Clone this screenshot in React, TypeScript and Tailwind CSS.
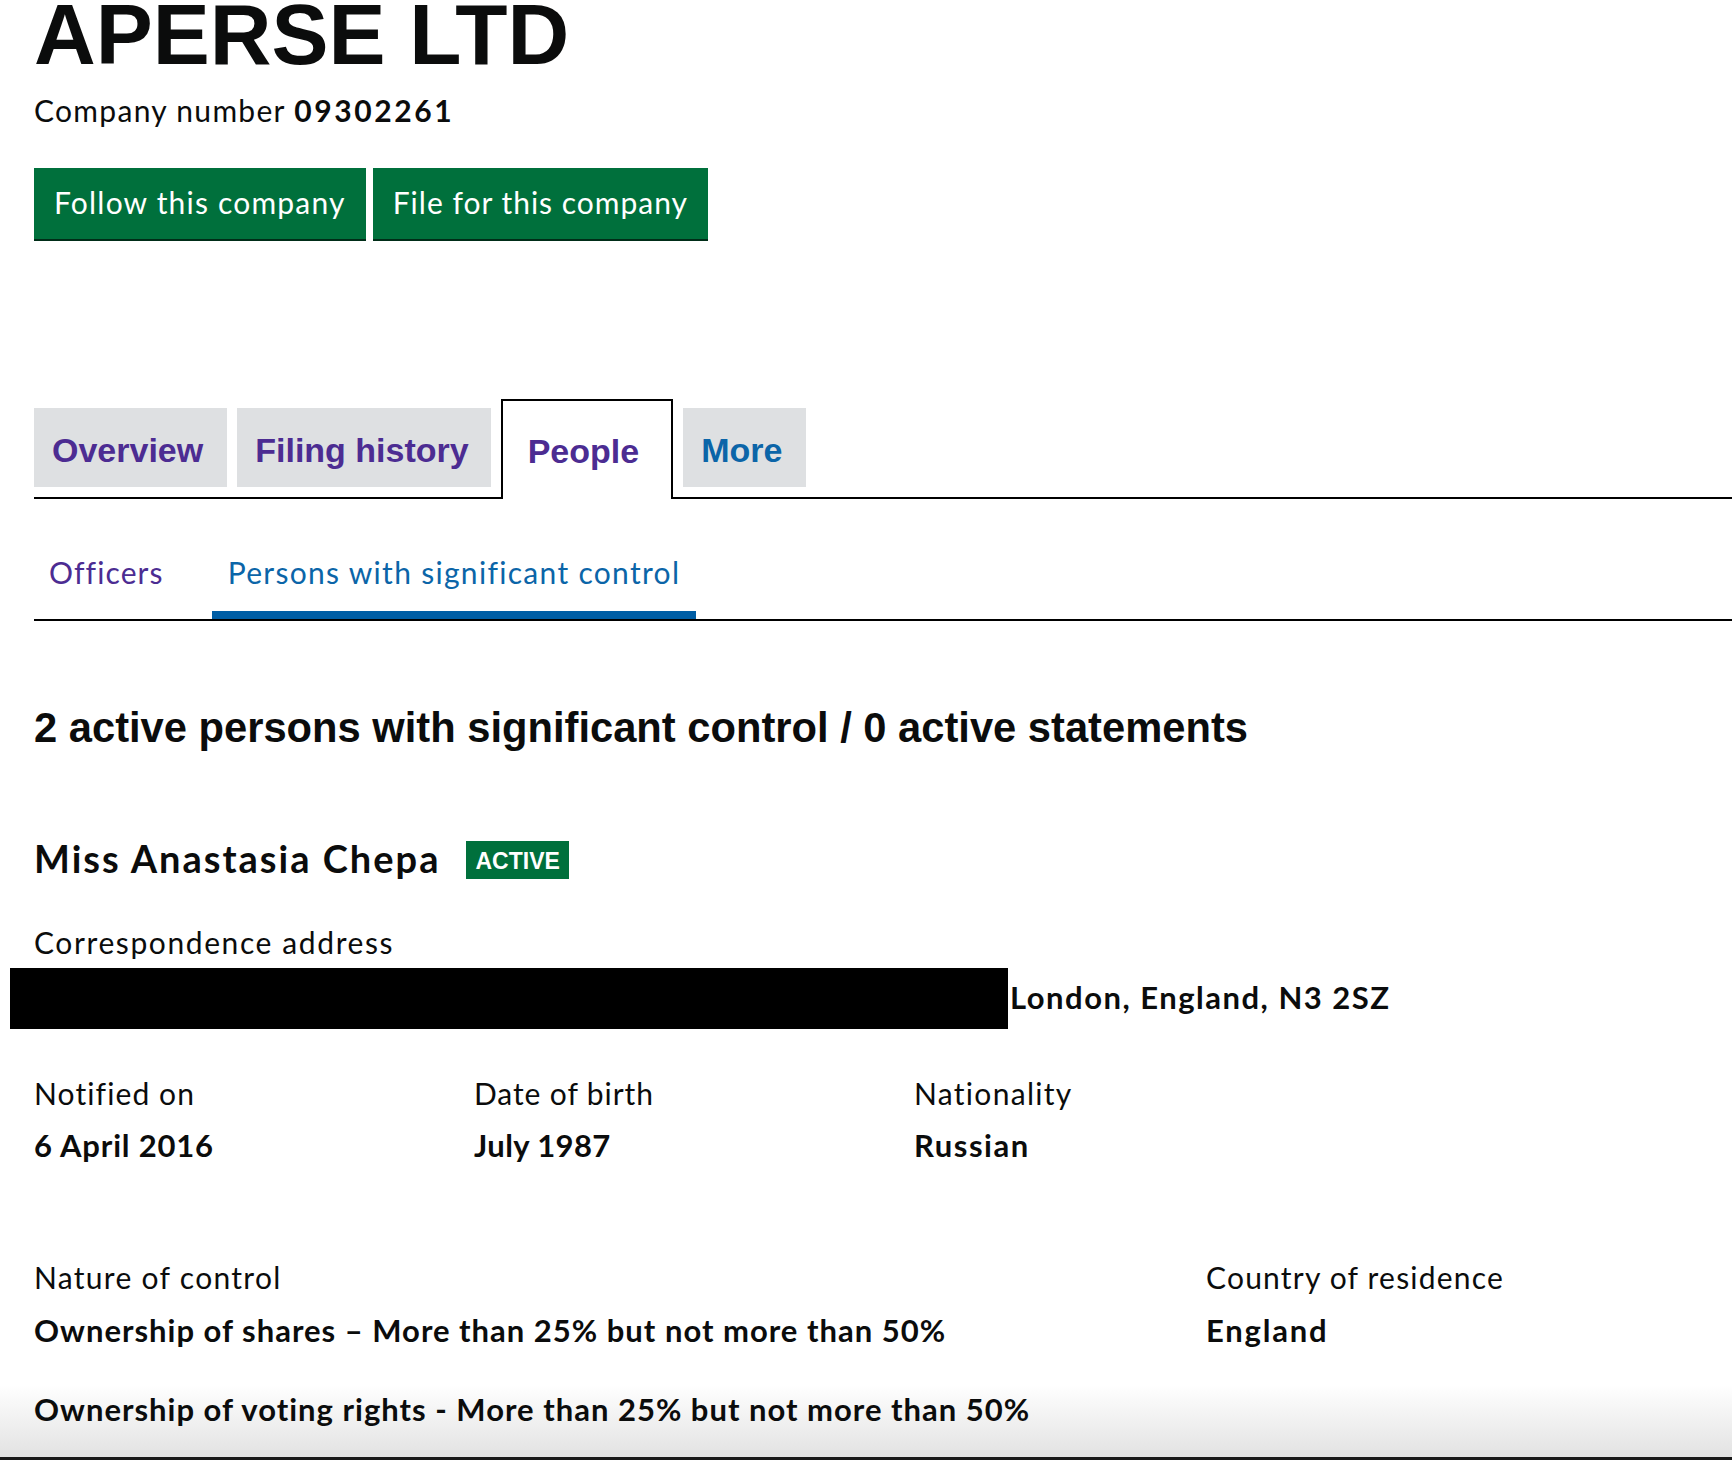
import React from "react";

const arial = "font-['Liberation_Sans',Arial,sans-serif]";
const gds = "font-['Lato','Noto_Sans',sans-serif]";

export default function App() {
  return (
    <div
      className={`relative w-[1732px] h-[1460px] overflow-hidden border-b-[3px] border-[#1a1a1a] bg-[linear-gradient(to_bottom,#ffffff_1385px,#e2e2e2_1457px)] text-[#0b0c0c] ${gds}`}
    >
      <div className="pl-[34px]">
        <h1 className={`${arial} -mt-[7px] text-[85.5px] leading-[84px] font-bold`}>APERSE LTD</h1>
        <p className="mt-[15px] text-[30px] leading-[36px] tracking-[1.3px]">
          Company number <strong className="font-bold tracking-[2.6px]">09302261</strong>
        </p>
        <div className="mt-[40px] flex gap-[7px]">
          <button className="h-[71px] px-[20px] pb-[3px] bg-[#00703c] text-white text-[30px] tracking-[1.2px] shadow-[0_2px_0_#002d18]">
            Follow this company
          </button>
          <button className="h-[71px] px-[20px] pb-[3px] bg-[#00703c] text-white text-[30px] tracking-[1px] shadow-[0_2px_0_#002d18]">
            File for this company
          </button>
        </div>

        {/* Main tabs */}
        <div className={`${arial} mt-[160px] flex items-start gap-[10px] border-b-2 border-black font-bold text-[34px]`}>
          <div className="mt-[9px] mb-[10px] h-[79px] pl-[18px] pr-[24px] pt-[6px] flex items-center bg-[#dee0e2] text-[#4c2c92]">Overview</div>
          <div className="mt-[9px] mb-[10px] h-[79px] pl-[18px] pr-[22px] pt-[6px] flex items-center bg-[#dee0e2] text-[#4c2c92]">Filing history</div>
          <div className="relative -mb-[2px] h-[100px] pl-[25px] pr-[32px] pt-[2px] flex items-center border-2 border-b-0 border-black bg-white text-[#4c2c92]">People</div>
          <div className="mt-[9px] mb-[10px] h-[79px] pl-[18px] pr-[24px] pt-[6px] flex items-center bg-[#dee0e2] text-[#0b65a8]">More</div>
        </div>

        {/* Sub tabs */}
        <div className="flex border-b-2 border-black text-[30px] leading-[36px] tracking-[1.1px]">
          <div className="px-[15px] pt-[55px] pb-[21px] border-b-[8px] border-transparent text-[#4c2c92]">Officers</div>
          <div className="ml-[33px] px-[16px] pt-[55px] pb-[21px] border-b-[8px] border-[#005ea5] text-[#0b65a8] tracking-[1.3px]">
            Persons with significant control
          </div>
        </div>

        <h2 className={`${arial} mt-[83px] text-[41.7px] leading-[48px] font-bold`}>
          2 active persons with significant control / 0 active statements
        </h2>

        <div className="mt-[82px] flex items-center h-[48px]">
          <span className="text-[38px] leading-[48px] font-bold tracking-[2px]">Miss Anastasia Chepa</span>
          <span className={`${arial} ml-[26px] mt-[4px] h-[38px] px-[9px] pt-[3px] flex items-center bg-[#00703c] text-white text-[23px] font-bold`}>
            ACTIVE
          </span>
        </div>

        <p className="mt-[42px] text-[30px] leading-[36px] tracking-[1.6px]">Correspondence address</p>
        <div className="mt-[8px] -ml-[24px] flex items-center">
          <div className="w-[998px] h-[61px] bg-black" />
          <span className="ml-[2px] -mt-[3px] text-[31px] leading-[36px] font-bold tracking-[1.5px]">London, England, N3 2SZ</span>
        </div>

        <div className="mt-[46px] grid grid-cols-[440px_440px_440px]">
          <div>
            <p className="text-[30px] leading-[36px] tracking-[1.1px]">Notified on</p>
            <p className="mt-[16px] text-[31px] leading-[36px] font-bold tracking-[0.8px]">6 April 2016</p>
          </div>
          <div>
            <p className="text-[30px] leading-[36px] tracking-[0.9px]">Date of birth</p>
            <p className="mt-[16px] text-[31px] leading-[36px] font-bold tracking-[0.4px]">July 1987</p>
          </div>
          <div>
            <p className="text-[30px] leading-[36px] tracking-[1.3px]">Nationality</p>
            <p className="mt-[16px] text-[31px] leading-[36px] font-bold tracking-[1.5px]">Russian</p>
          </div>
        </div>

        <div className="mt-[96px] grid grid-cols-[1172px_1fr]">
          <div>
            <p className="text-[30px] leading-[36px] tracking-[1.3px]">Nature of control</p>
            <p className="mt-[17px] text-[31px] leading-[36px] font-bold tracking-[1px]">
              Ownership of shares – More than 25% but not more than 50%
            </p>
            <p className="mt-[43px] text-[31px] leading-[36px] font-bold tracking-[1px]">
              Ownership of voting rights - More than 25% but not more than 50%
            </p>
          </div>
          <div>
            <p className="text-[30px] leading-[36px] tracking-[1.2px]">Country of residence</p>
            <p className="mt-[17px] text-[31px] leading-[36px] font-bold tracking-[1.8px]">England</p>
          </div>
        </div>
      </div>
    </div>
  );
}
